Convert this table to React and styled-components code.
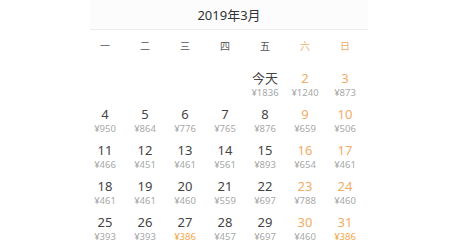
import React from "react";
import styled, { createGlobalStyle } from "styled-components";

const Global = createGlobalStyle`
  html, body { margin: 0; padding: 0; background: #fff; }
  body { font-family: "Noto Sans", "Noto Sans CJK SC", sans-serif; }
`;

const Page = styled.div`
  width: 450px;
  height: 242px;
  overflow: hidden;
  padding-left: 85px;
  box-sizing: border-box;
`;

const TitleBar = styled.div`
  margin-left: 5px;
  width: 278px;
  height: 29px;
  background: #fcfcfc;
  border-bottom: 1px solid #eeeeee;
  display: flex;
  align-items: center;
  justify-content: center;
  font-size: 13px;
  color: #333;
`;

const Grid = styled.div`
  display: grid;
  grid-template-columns: repeat(7, 40px);
  width: 280px;
`;

const WeekHead = styled.div`
  height: 30px;
  display: flex;
  align-items: center;
  justify-content: center;
  font-size: 10px;
  color: ${(p) => (p.$weekend ? "#eeb06a" : "#555")};
`;

const Spacer = styled.div`
  grid-column: 1 / -1;
  height: 7px;
`;

const Cell = styled.div`
  height: 36px;
  padding-top: 3px;
  box-sizing: border-box;
  display: flex;
  flex-direction: column;
  align-items: center;
`;

const Day = styled.div`
  font-size: 13px;
  line-height: 17px;
  color: ${(p) => (p.$weekend ? "#f2ac66" : "#444")};
`;

const Price = styled.div`
  font-size: 9.5px;
  line-height: 12px;
  color: ${(p) => (p.$low ? "#f2a84a" : "#a8a8a8")};
`;

const weeks = ["一", "二", "三", "四", "五", "六", "日"];

const data = [
  [null, null, null, null, ["今天", 1836], [2, 1240], [3, 873]],
  [[4, 950], [5, 864], [6, 776], [7, 765], [8, 876], [9, 659], [10, 506]],
  [[11, 466], [12, 451], [13, 461], [14, 561], [15, 893], [16, 654], [17, 461]],
  [[18, 461], [19, 461], [20, 460], [21, 559], [22, 697], [23, 788], [24, 460]],
  [[25, 393], [26, 393], [27, 386], [28, 457], [29, 697], [30, 460], [31, 386]],
];

export default function App() {
  return (
    <Page>
      <Global />
      <TitleBar>2019年3月</TitleBar>
      <Grid>
        {weeks.map((w, i) => (
          <WeekHead key={w} $weekend={i >= 5}>
            {w}
          </WeekHead>
        ))}
        <Spacer />
        {data.flatMap((row, r) =>
          row.map((c, i) =>
            c ? (
              <Cell key={`${r}-${i}`}>
                <Day $weekend={i >= 5 && c[0] !== "今天"}>{c[0]}</Day>
                <Price $low={c[1] === 386}>¥{c[1]}</Price>
              </Cell>
            ) : (
              <Cell key={`${r}-${i}`} />
            )
          )
        )}
      </Grid>
    </Page>
  );
}
